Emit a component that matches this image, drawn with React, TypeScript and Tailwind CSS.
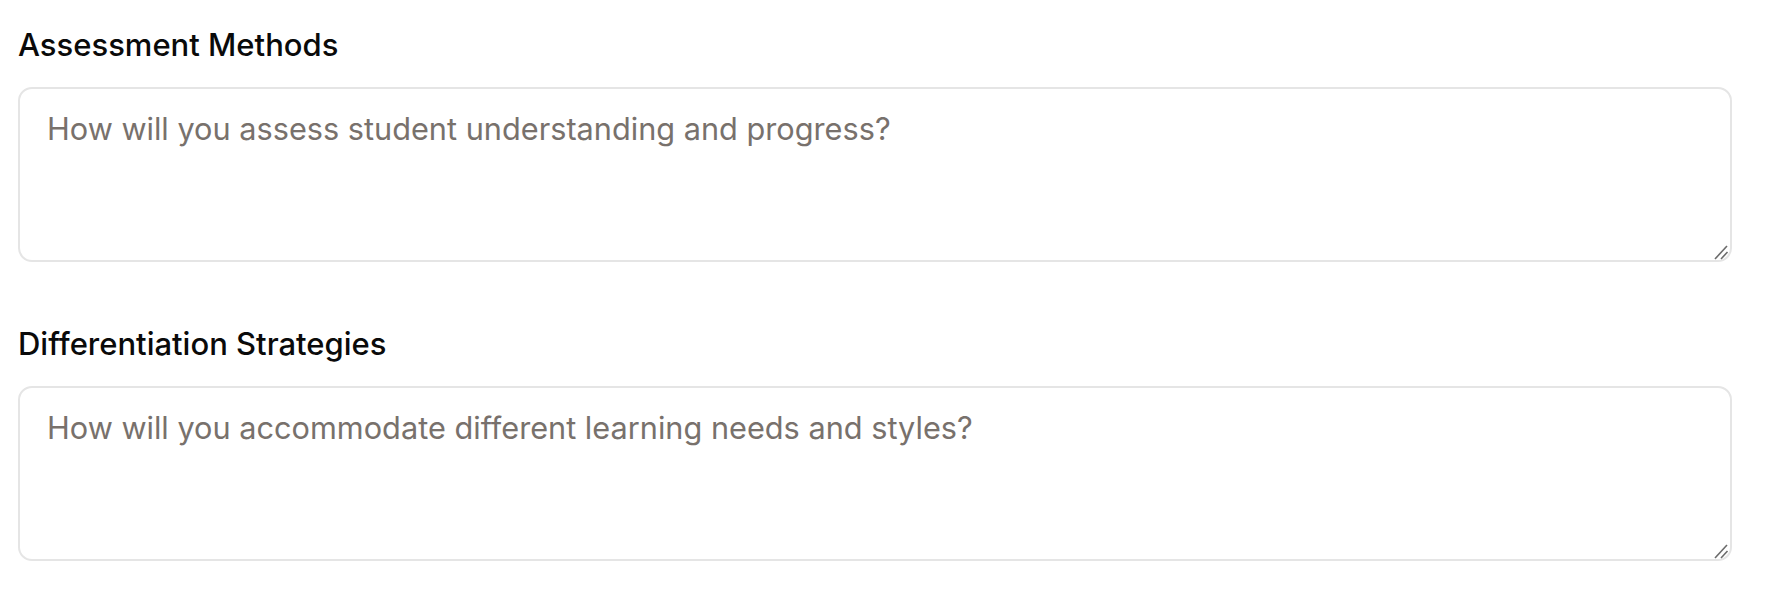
import React from "react";

const fields = [
  {
    id: "assessment",
    label: "Assessment Methods",
    placeholder: "How will you assess student understanding and progress?",
  },
  {
    id: "differentiation",
    label: "Differentiation Strategies",
    placeholder: "How will you accommodate different learning needs and styles?",
  },
];

// resize grip drawn over the textarea corner
function Grip() {
  return (
    <svg
      className="pointer-events-none absolute right-0 bottom-0 w-[20px] h-[20px]"
      viewBox="0 0 20 20"
      fill="none"
      stroke="#6b6b6b"
      strokeWidth="1.6"
    >
      <line x1="3" y1="17" x2="15" y2="4" />
      <line x1="9" y1="17" x2="15.5" y2="10" />
    </svg>
  );
}

export default function App() {
  return (
    <div className="min-h-screen bg-white font-['Inter',sans-serif] pl-[18px] pt-[22px]">
      <div className="w-[1714px] flex flex-col gap-[59px]">
        {fields.map((f) => (
          <div key={f.id} className="flex flex-col gap-[20px]">
            <label
              htmlFor={f.id}
              className="text-[31px] leading-[45px] font-medium text-[#0a0a0a]"
            >
              {f.label}
            </label>
            <div className="relative">
              <textarea
                id={f.id}
                placeholder={f.placeholder}
                className="block h-[175px] w-full resize-none rounded-[14px] border-2 border-[#e5e5e5] bg-white px-[27px] py-[17px] text-[30.7px] leading-[45px] text-[#0a0a0a] placeholder:text-[#78716c] outline-none"
              />
              <Grip />
            </div>
          </div>
        ))}
      </div>
    </div>
  );
}
